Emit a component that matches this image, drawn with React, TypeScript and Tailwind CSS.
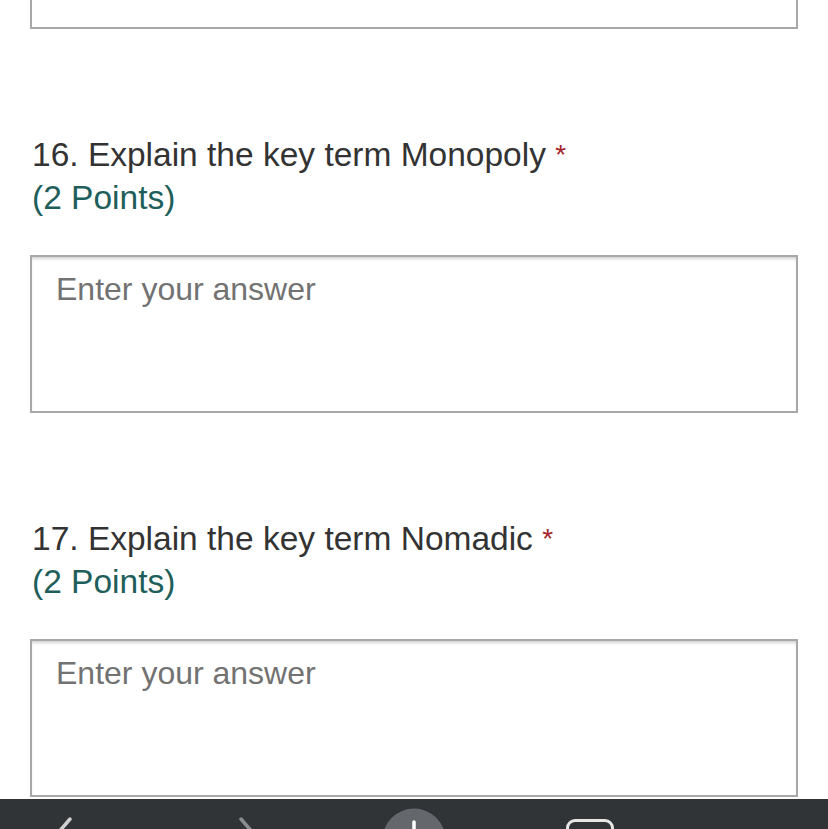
const questions = [
  { num: 16, term: "Monopoly" },
  { num: 17, term: "Nomadic" },
];

const AnswerBox = () => (
  <textarea
    placeholder="Enter your answer"
    className="block w-full h-[158px] resize-none border-2 border-[#a8a8a8] bg-white px-6 pt-[12px] text-[32px] leading-[40px] text-[#333333] placeholder:text-[#727272] shadow-[inset_0_3px_3px_-1px_rgba(0,0,0,0.18)] outline-none"
  />
);

const Question = ({ num, term }: { num: number; term: string }) => (
  <div className="flex flex-col">
    <div className="mt-[104px] pl-[2px] text-[33.5px] leading-[43px]">
      <div className="text-[#333333]">
        {num}. Explain the key term {term}{" "}
        <span className="text-[#a4262c] text-[28px] align-top">*</span>
      </div>
      <div className="text-[#1e5e5b]">(2 Points)</div>
    </div>
    <div className="mt-[36px]">
      <AnswerBox />
    </div>
  </div>
);

const BottomBar = () => (
  <div className="h-[30px] mt-[2px] bg-[#313437] grid grid-cols-5 overflow-hidden">
    <div className="flex justify-center pt-[18px] pr-[36px]">
      <svg width="30" height="30" viewBox="0 0 30 30" fill="none">
        <path d="M20 2 L8 16 L20 30" stroke="#d0d0d0" strokeWidth="3.5" strokeLinecap="round" strokeLinejoin="round" />
      </svg>
    </div>
    <div className="flex justify-center pt-[18px]">
      <svg width="30" height="30" viewBox="0 0 30 30" fill="none">
        <path d="M8 2 L20 16 L8 30" stroke="#8a8d90" strokeWidth="3.5" strokeLinecap="round" strokeLinejoin="round" />
      </svg>
    </div>
    <div className="flex justify-center pt-[9px]">
      <svg width="64" height="64" viewBox="0 0 64 64" fill="none">
        <circle cx="32" cy="32" r="31.5" fill="#64686c" />
        <path d="M32 14 V50 M14 32 H50" stroke="#ffffff" strokeWidth="3.5" strokeLinecap="round" />
      </svg>
    </div>
    <div className="flex justify-center pt-[20px] pl-[20px]">
      <div className="w-[48px] h-[40px] rounded-[9px] border-[3px] border-[#e6e6e6]" />
    </div>
    <div />
  </div>
);

const App = () => {
  return (
    <div className="w-[828px] h-[829px] overflow-hidden bg-white flex flex-col font-['Liberation_Sans',Arial,sans-serif]">
      <div className="px-[30px] flex-1 flex flex-col">
        <div className="h-[29px] border-x-2 border-b-2 border-[#a8a8a8] bg-white" />
        {questions.map((q) => (
          <Question key={q.num} num={q.num} term={q.term} />
        ))}
      </div>
      <BottomBar />
    </div>
  );
};

export default App;
